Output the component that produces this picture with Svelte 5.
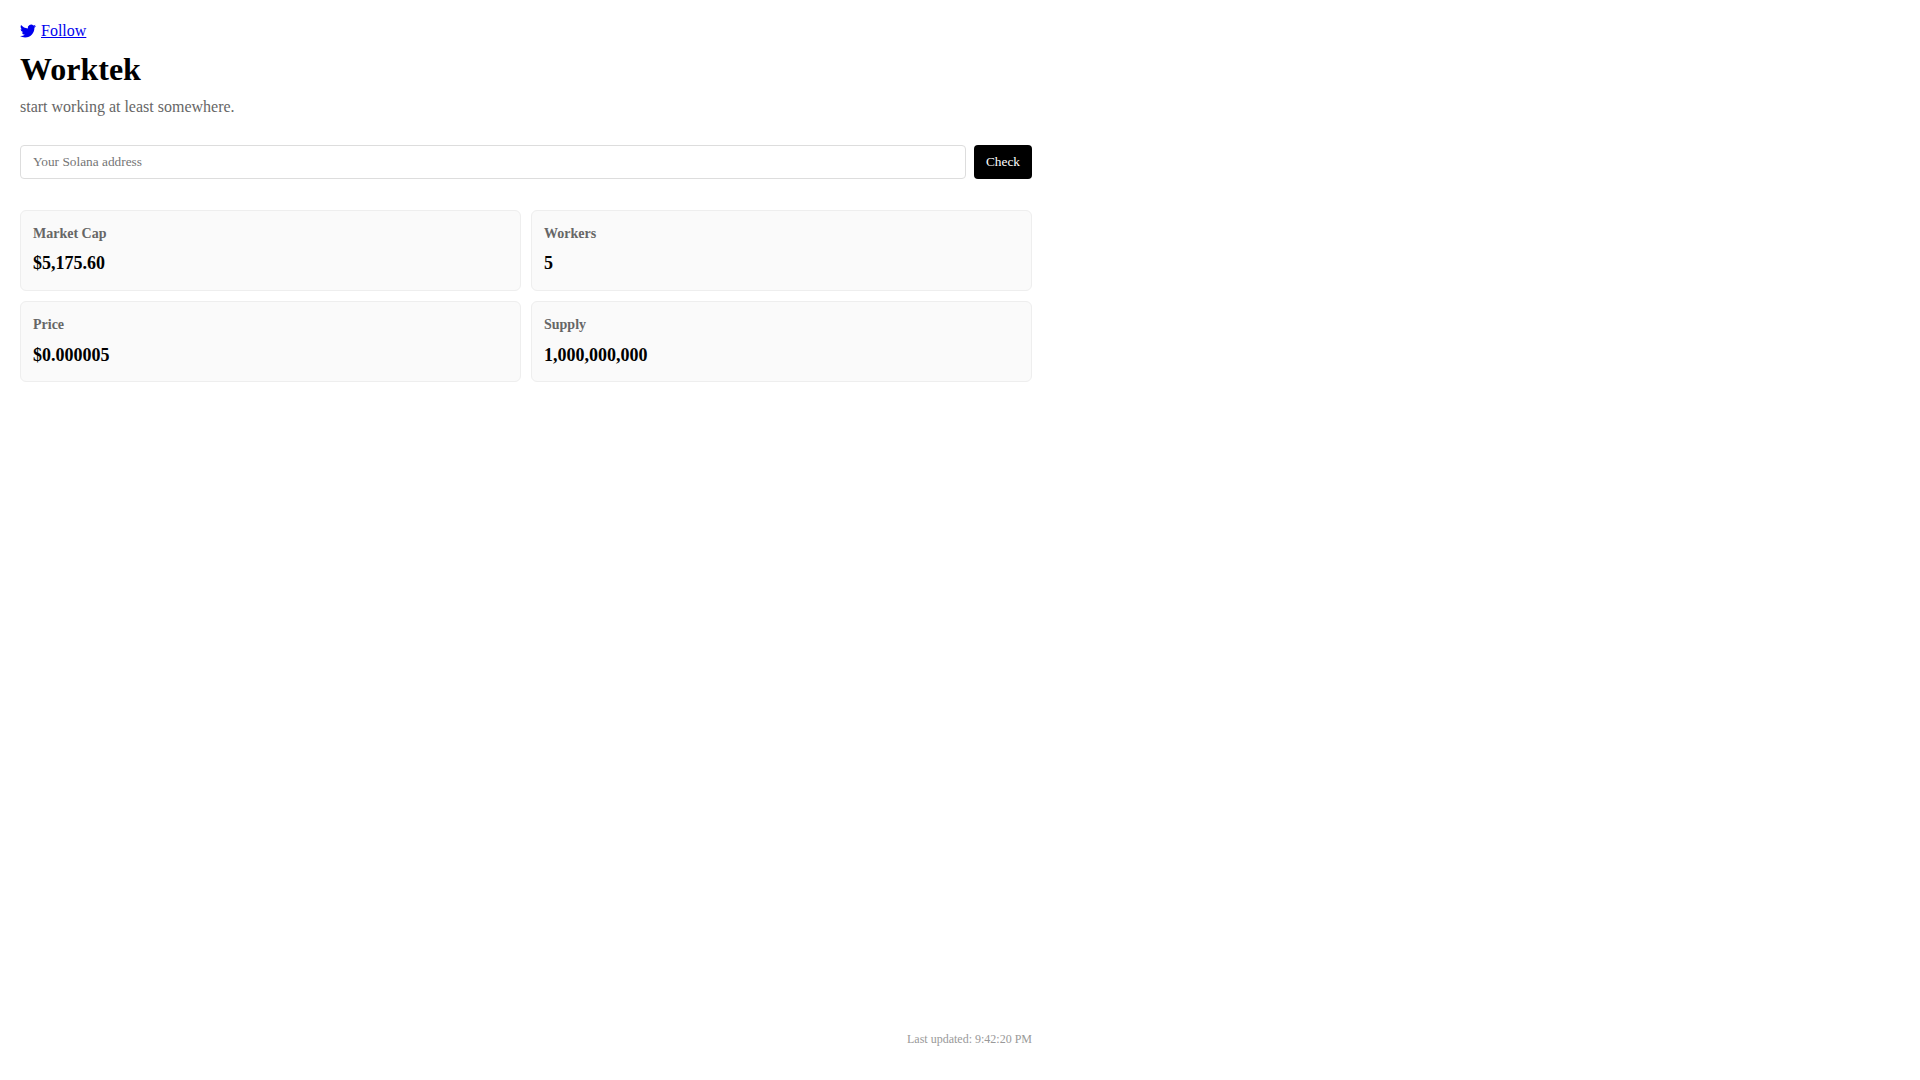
<script lang="ts">
  const stats = [
    { label: "Market Cap", value: "$5,175.60" },
    { label: "Workers", value: "5" },
    { label: "Price", value: "$0.000005" },
    { label: "Supply", value: "1,000,000,000" },
  ];

  let address = "";
</script>

<div class="page">
  <a class="follow" href="#follow">
    <svg viewBox="0 0 24 24" width="16" height="16" fill="currentColor" aria-hidden="true">
      <path d="M23.953 4.57a10 10 0 01-2.825.775 4.958 4.958 0 002.163-2.723c-.951.555-2.005.959-3.127 1.184a4.92 4.92 0 00-8.384 4.482C7.69 8.095 4.067 6.13 1.64 3.162a4.822 4.822 0 00-.666 2.475c0 1.71.87 3.213 2.188 4.096a4.904 4.904 0 01-2.228-.616v.06a4.923 4.923 0 003.946 4.827 4.996 4.996 0 01-2.212.085 4.936 4.936 0 004.604 3.417 9.867 9.867 0 01-6.102 2.105c-.39 0-.779-.023-1.17-.067a13.995 13.995 0 007.557 2.209c9.053 0 13.998-7.496 13.998-13.985 0-.21 0-.42-.015-.63A9.935 9.935 0 0024 4.59z" />
    </svg>
    <span>Follow</span>
  </a>

  <h1>Worktek</h1>
  <p class="tagline">start working at least somewhere.</p>

  <form class="check-form" on:submit|preventDefault>
    <input type="text" placeholder="Your Solana address" bind:value={address} />
    <button type="submit">Check</button>
  </form>

  <div class="stats">
    {#each stats as stat}
      <div class="stat">
        <div class="stat-label">{stat.label}</div>
        <div class="stat-value">{stat.value}</div>
      </div>
    {/each}
  </div>

  <div class="updated">Last updated: 9:42:20 PM</div>
</div>

<style>
  :global(body) {
    background: #fff;
    color: #000;
    font-family: "Liberation Serif", "Times New Roman", serif;
  }

  .page {
    box-sizing: border-box;
    width: 1052px;
    height: 1080px;
    padding: 20px 20px 33px;
    display: flex;
    flex-direction: column;
  }

  .follow {
    display: flex;
    align-items: center;
    gap: 5px;
    height: 22px;
    font-size: 16px;
    color: #00e;
  }

  .follow svg {
    flex: none;
  }

  h1 {
    margin: 9px 0 0;
    font-size: 32px;
    line-height: 37px;
    font-weight: bold;
  }

  .tagline {
    margin: 10px 0 0;
    font-size: 16px;
    line-height: 18px;
    color: #666;
  }

  .check-form {
    display: flex;
    gap: 8px;
    margin-top: 29px;
  }

  input {
    flex: 1;
    box-sizing: border-box;
    height: 34px;
    padding: 0 12px;
    border: 1px solid #ddd;
    border-radius: 4px;
    font-family: inherit;
    font-size: 13.33px;
    outline: none;
  }

  input::placeholder {
    color: #757575;
  }

  button {
    box-sizing: border-box;
    height: 34px;
    padding: 0 12px;
    border: none;
    border-radius: 4px;
    background: #000;
    color: #fff;
    font-family: inherit;
    font-size: 13.33px;
  }

  .stats {
    display: grid;
    grid-template-columns: 1fr 1fr;
    gap: 10px;
    margin-top: 31px;
  }

  .stat {
    padding: 12px;
    border: 1px solid #eee;
    border-radius: 6px;
    background: #fafafa;
    line-height: 1.6;
  }

  .stat-label {
    font-size: 14px;
    font-weight: bold;
    color: #666;
  }

  .stat-value {
    margin-top: 4px;
    font-size: 18px;
    font-weight: bold;
  }

  .updated {
    margin-top: auto;
    text-align: right;
    font-size: 12px;
    color: #999;
  }
</style>
